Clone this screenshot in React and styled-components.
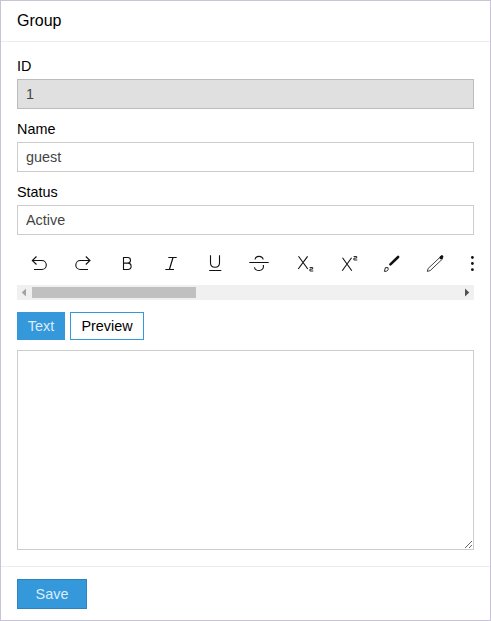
import React from 'react';
import styled, { createGlobalStyle } from 'styled-components';

const GlobalStyle = createGlobalStyle`
  *, *::before, *::after { box-sizing: border-box; }
  body {
    margin: 0;
    background: #fff;
    color: #000;
    font: 14.4px/20px "Liberation Sans", Arial, sans-serif;
  }
`;

const Panel = styled.main`
  display: flex;
  flex-direction: column;
  width: 491px;
  height: 621px;
  border: 1px solid #c8c4d6;
  background: #fff;
`;

const Header = styled.header`
  height: 41px;
  padding: 10px 16px 0;
  border-bottom: 1px solid #ebebf0;
  font-size: 16px;
`;

const Body = styled.form`
  flex: 1;
  display: flex;
  flex-direction: column;
  padding: 14px 16px 0;
`;

const Field = styled.label`
  display: flex;
  flex-direction: column;
  height: 63px;
`;

const Label = styled.span`
  height: 23px;
`;

const Input = styled.input`
  width: 100%;
  height: 30px;
  padding: 0 8px;
  border: 1px solid ${(p) => (p.readOnly ? '#bcbcbc' : '#ccc')};
  border-radius: 0;
  background: ${(p) => (p.readOnly ? '#e0e0e0' : '#fff')};
  color: #444;
  font: inherit;
  outline: none;
`;

const Toolbar = styled.div`
  display: flex;
  height: 40px;
  overflow: hidden;
`;

const Tool = styled.button`
  flex: 0 0 44px;
  height: 40px;
  padding: 0;
  border: 0;
  background: none;
  svg {
    display: block;
    fill: none;
    stroke: #111;
    stroke-width: 1.1;
  }
`;

const ScrollTrack = styled.div`
  display: flex;
  align-items: center;
  height: 15px;
  background: #f0f0f0;
`;

const ScrollArrow = styled.svg`
  flex: 0 0 15px;
  width: 15px;
  height: 15px;
  fill: ${(p) => (p.$muted ? '#a3a3a3' : '#505050')};
`;

const Thumb = styled.div`
  width: 164px;
  height: 11px;
  margin-right: auto;
  background: #c0c0c0;
`;

const Tabs = styled.div`
  display: flex;
  gap: 5px;
  margin: 12px 0 10px;
`;

const Tab = styled.button`
  width: ${(p) => p.$width}px;
  height: 28px;
  padding: 0;
  border: 1px solid #3498db;
  background: ${(p) => (p.$active ? '#3498db' : '#fff')};
  color: ${(p) => (p.$active ? '#dcedf9' : '#000')};
  font: inherit;
`;

const Editor = styled.textarea`
  display: block;
  width: 100%;
  height: 200px;
  padding: 8px;
  border: 1px solid #ccc;
  background: #fff;
  font: inherit;
  resize: both;
  outline: none;
`;

const Footer = styled.footer`
  height: 54px;
  padding: 12px 16px;
  border-top: 1px solid #ebebf0;
`;

const SaveButton = styled.button`
  width: 70px;
  height: 30px;
  padding: 0;
  border: 1px solid #2f83bd;
  background: #3498db;
  color: #dcedf9;
  font: inherit;
`;

const tools = [
  ['Undo', <path d="M19.5 11.5l-4.2 4 4.2 4M15.5 15.5h9.3a4.5 4.5 0 0 1 0 9H17" />],
  ['Redo', <path d="M24.8 11.5l4.2 4-4.2 4M28.8 15.5h-9.5a4.5 4.5 0 0 0 0 9h7.7" />],
  ['Bold', <path d="M18.5 12.5h4.2a2.8 2.8 0 0 1 0 5.6h-4.2 4.4a3.2 3.2 0 0 1 0 6.4h-4.4z" />],
  ['Italic', <path d="M19.3 12.5h8.4M16.3 24.5h8.7M24 12.5l-3.6 12" strokeWidth="1.2" />],
  ['Underline', <path d="M17.5 10.3v7.5c0 6 9 6 9 0v-7.5M16.2 25.5h12.1" />],
  ['Strikethrough', (
    <path d="M12.3 17.5h19.4M18 14.5c.3-2 2-3.1 4-3.1s3.8 1.1 4.2 3.1M26.3 20c.7 3.4-1.2 5.5-4.2 5.5-2.8 0-4.4-1.3-4.6-3.3" />
  )],
  ['Subscript', (
    <>
      <path d="M17.5 11.3L26.8 24M26.6 11.3L17.2 24" />
      <path d="M28.7 22.5h3v1.6h-2.8v1.9h3.4" strokeWidth=".9" />
    </>
  )],
  ['Superscript', (
    <>
      <path d="M17.5 12.7L26.8 25.7M26.6 12.7L17.2 25.7" />
      <path d="M28.7 11.5h3v1.6h-2.8v1.9h3.4" strokeWidth=".9" />
    </>
  )],
  ['Background color', (
    <>
      <path d="M21.4 19.4l7.7-7.4" strokeWidth="2.6" strokeLinecap="round" />
      <path d="M15.4 26.4l1-3.8 2.6.1.2 2-1.5 1.5z" strokeWidth=".9" />
    </>
  )],
  ['Text color', (
    <>
      <path d="M14.3 26.4l.8-2.9L27.7 11.7l2 2.1-12.5 11.8z" strokeWidth=".8" />
      <path d="M28 12.6l.9-.9" strokeWidth="3" strokeLinecap="round" />
    </>
  )],
  ['More', (
    <g fill="#111" stroke="none">
      <circle cx="15.4" cy="12.5" r="1.4" />
      <circle cx="15.4" cy="18.5" r="1.4" />
      <circle cx="15.4" cy="24.7" r="1.4" />
    </g>
  )],
];

export default function App() {
  return (
    <>
      <GlobalStyle />
      <Panel>
        <Header>Group</Header>
        <Body>
          <Field>
            <Label>ID</Label>
            <Input readOnly defaultValue="1" />
          </Field>
          <Field>
            <Label>Name</Label>
            <Input defaultValue="guest" />
          </Field>
          <Field>
            <Label>Status</Label>
            <Input defaultValue="Active" />
          </Field>
          <Toolbar>
            {tools.map(([name, drawing]) => (
              <Tool key={name} type="button" aria-label={name}>
                <svg width="44" height="40" viewBox="0 0 44 40">{drawing}</svg>
              </Tool>
            ))}
          </Toolbar>
          <ScrollTrack>
            <ScrollArrow $muted viewBox="0 0 15 15"><path d="M4.8 7.5L9 3.5v8z" /></ScrollArrow>
            <Thumb />
            <ScrollArrow viewBox="0 0 15 15"><path d="M10.2 7.5L6 3.5v8z" /></ScrollArrow>
          </ScrollTrack>
          <Tabs>
            <Tab type="button" $active $width={48}>Text</Tab>
            <Tab type="button" $width={74}>Preview</Tab>
          </Tabs>
          <Editor />
        </Body>
        <Footer>
          <SaveButton type="button">Save</SaveButton>
        </Footer>
      </Panel>
    </>
  );
}
